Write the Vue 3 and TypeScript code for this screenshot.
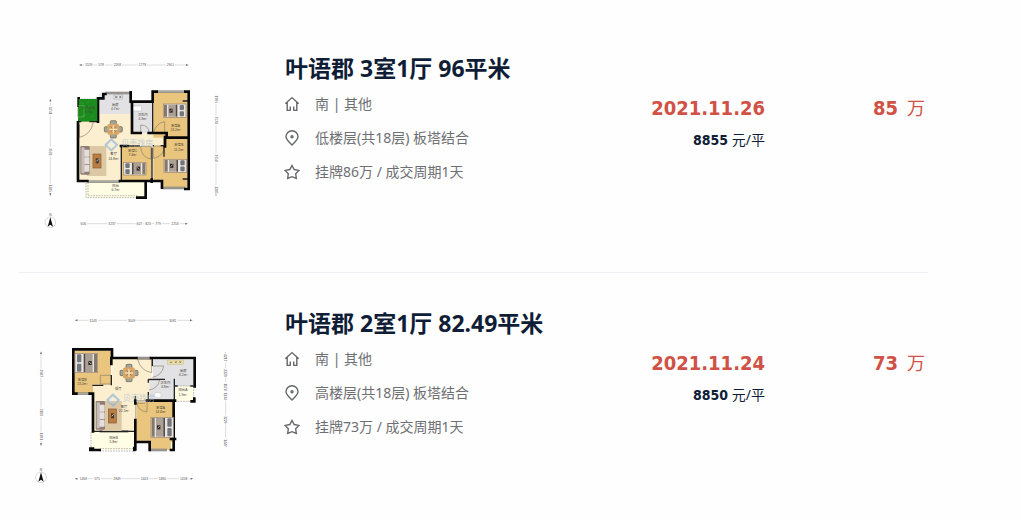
<script setup lang="ts">
type Box = [x: number, y: number, w: number, h: number, fill: string]
type Label = [x: number, y: number, text: string]
type Bed = { x: number; y: number; w: number; h: number; flip: boolean }

interface Dimension {
  x: number
  y: number
  length: number
  vertical: boolean
  marks: [offset: number, text: string][]
}

interface Plan {
  origin: [number, number]
  floors: Box[]
  walls: string
  thin: string
  doors: string
  windows: string
  dashes: string
  beds: Bed[]
  sofa: [number, number]
  dining: [number, number]
  brand: [number, number]
  labels: Label[]
  dimensions: Dimension[]
  compass: [number, number]
}

interface Listing {
  id: number
  title: string
  facing: string
  floor: string
  deal: string
  date: string
  unitPrice: string
  total: string
  plan: Plan
}

const cream = '#fbefcf'
const wood = '#e9c57e'
const tile = '#e2e2e5'
const balcony = '#fffde4'

const listings: Listing[] = [
  {
    id: 1,
    title: '叶语郡 3室1厅 96平米',
    facing: '南 | 其他',
    floor: '低楼层(共18层) 板塔结合',
    deal: '挂牌86万 / 成交周期1天',
    date: '2021.11.26',
    unitPrice: '8855',
    total: '85',
    plan: {
      origin: [105, 105],
      floors: [
        [27, 108, 62, 180, cream],
        [86, 86, 100, 202, cream],
        [150, 144, 138, 38, cream],
        [24, 42, 62, 68, '#249126'],
        [88, 25, 98, 62, tile],
        [188, 52, 58, 92, tile],
        [250, 22, 102, 136, wood],
        [250, 182, 34, 108, wood],
        [280, 160, 72, 148, wood],
        [155, 183, 90, 106, wood],
        [48, 291, 176, 48, balcony],
      ],
      walls:
        'M26 40V62M24 112V288H52M150 288H276V308M245 284V290M84 40V110M87 40H100V27H106M182 22V50H248V20H260M346 20H356V312H346M355 158H285M285 156V184M186 50V144H212M236 144H290V156M153 183H172M227 290V338H202',
      thin: 'M84 110H58M248 50V144M338 48H356M338 282H356M154 183V288M154 183H210M246 188V284M248 182H252M272 182H284M282 184V215M24 110H34',
      doors:
        'M28 118V157Q62 150 70 112M212 144V120Q237 120 237 144M248 144H284V110Q260 112 250 144M212 184H243V222Q214 218 212 184M250 220V183H284M250 220Q280 215 284 184M42 64H24V96',
      windows: 'M106 24H182M260 20H346M276 309H346M52 290H150',
      dashes: 'M26 42H84M48 294V338H202M54 292V332H202',
      beds: [
        { x: 280, y: 57, w: 68, h: 40, flip: false },
        { x: 282, y: 223, w: 68, h: 39, flip: false },
        { x: 160, y: 232, w: 68, h: 38, flip: true },
      ],
      sofa: [31, 183],
      dining: [130, 133],
      brand: [124, 179],
      labels: [
        [56, 72, '入户花园'], [56, 84, '4.7m²'],
        [136, 64, '厨房'], [136, 76, '4.7m²'],
        [218, 94, '卫生间'], [218, 106, '4.3m²'],
        [317, 125, '卧室A'], [317, 137, '13.2m²'],
        [327, 184, '卧室B'], [327, 197, '11.2m²'],
        [188, 202, '卧室C'], [188, 214, '7.4m²'],
        [131, 211, '客厅'], [131, 224, '24.8m²'],
        [137, 306, '阳台'], [137, 319, '6.7m²'],
      ],
      dimensions: [
        { x: 133, y: 45, length: 327, vertical: false, marks: [[28, '1559'], [65, '578'], [114, '2268'], [189, '1778'], [273, '2901']] },
        { x: 135, y: 521, length: 323, vertical: false, marks: [[10, '606'], [96, '3237'], [178, '607'], [204, '823'], [234, '779'], [285, '2253']] },
        { x: 46, y: 147, length: 290, vertical: true, marks: [[35, '1741'], [158, '3578'], [268, '1285']] },
        { x: 543, y: 134, length: 304, vertical: true, marks: [[14, '1906'], [77, '3578'], [190, '3658'], [286, '1285']] },
      ],
      compass: [46, 517],
    },
  },
  {
    id: 2,
    title: '叶语郡 2室1厅 82.49平米',
    facing: '南 | 其他',
    floor: '高楼层(共18层) 板塔结合',
    deal: '挂牌73万 / 成交周期1天',
    date: '2021.11.24',
    unitPrice: '8850',
    total: '73',
    plan: {
      origin: [90, 111],
      floors: [
        [28, 26, 110, 128, wood],
        [142, 50, 118, 124, cream],
        [84, 128, 126, 140, cream],
        [200, 110, 52, 66, cream],
        [264, 54, 122, 78, tile],
        [254, 112, 72, 62, tile],
        [328, 132, 58, 46, balcony],
        [214, 178, 112, 122, wood],
        [256, 298, 62, 26, wood],
        [78, 270, 134, 54, balcony],
      ],
      walls:
        'M32 155H25V22H141V48H214M258 48H389V133M139 48V66M84 155V268M28 155H34M74 155H84M326 176V324H318M246 176H330M211 176V184M211 234V322M211 300H254V324M84 320H76V324H104M208 318V324M318 291H330M380 178H388V170',
      thin: 'M82 130H115M139 99V130M250 112H300M250 112V122M250 150V176M328 110V176M244 176H254M82 268H211M211 162V176M262 50V72M328 132H338M376 132H386',
      doors:
        'M140 100H106V126H139M218 50V52H260V92Q226 86 218 52M262 72H296Q292 100 262 106M252 114H284Q278 140 252 144M214 176H246V210Q216 206 214 176M212 234V184H240',
      windows: 'M34 155H74M254 324H306M104 268H190M215 48H258',
      dashes: 'M338 132H376M330 178H380M78 270V316M104 320H206M104 327H206M386 134V176',
      beds: [
        { x: 30, y: 34, w: 68, h: 58, flip: true },
        { x: 258, y: 226, w: 68, h: 60, flip: false },
      ],
      sofa: [92, 177],
      dining: [192, 93],
      brand: [144, 174],
      labels: [
        [52, 118, '卧室B'], [52, 130, '13.2m²'],
        [160, 144, '餐厅'],
        [355, 91, '厨房'], [355, 103, '6.2m²'],
        [301, 127, '卫生间'], [301, 139, '3.8m²'],
        [354, 148, '阳台A'], [354, 161, '1.9m²'],
        [177, 198, '客厅'], [177, 210, '22.1m²'],
        [287, 202, '卧室A'], [287, 214, '14.6m²'],
        [146, 290, '阳台B'], [146, 302, '5.8m²'],
      ],
      dimensions: [
        { x: 120, y: 46, length: 352, vertical: false, marks: [[54, '3143'], [170, '3009'], [293, '3081']] },
        { x: 120, y: 521, length: 354, vertical: false, marks: [[25, '1468'], [66, '575'], [126, '2849'], [208, '1443'], [262, '1680'], [326, '1458']] },
        { x: 18, y: 140, length: 282, vertical: true, marks: [[65, '2987'], [182, '3100'], [254, '1891']] },
        { x: 572, y: 142, length: 286, vertical: true, marks: [[16, '4217'], [62, '2229'], [104, '1178'], [132, '1134'], [202, '3229'], [272, '1487']] },
      ],
      compass: [18, 517],
    },
  },
]
</script>

<template>
  <main class="listings">
    <article v-for="item in listings" :key="item.id" class="listing">
      <svg class="plan" viewBox="0 0 600 570" role="img" :aria-label="item.title">
        <g
          v-for="(d, i) in item.plan.dimensions"
          :key="`d${i}`"
          :transform="`translate(${d.x} ${d.y}) rotate(${d.vertical ? 90 : 0})`"
        >
          <path :d="`M0 0H${d.length}`" stroke="#bdbdbd" stroke-width="1.5" />
          <path :d="`M0 0l7 -3v6zM${d.length} 0l-7 -3v6z`" fill="#666" />
          <g v-for="([offset, text], k) in d.marks" :key="k">
            <rect :x="offset - text.length * 3 - 2" y="-5" :width="text.length * 6 + 4" height="10" fill="#fff" />
            <text :x="offset" y="4" class="mark">{{ text }}</text>
          </g>
        </g>

        <g :transform="`translate(${item.plan.compass[0]} ${item.plan.compass[1]})`">
          <circle r="16" fill="#fff" stroke="#b5b5b5" stroke-width="1.5" />
          <path d="M0 -15L8 13L0 7L-8 13Z" fill="#111" />
          <text y="-20" class="mark">N</text>
        </g>

        <g :transform="`translate(${item.plan.origin[0]} ${item.plan.origin[1]})`" fill="none">
          <rect
            v-for="([x, y, w, h, fill], i) in item.plan.floors"
            :key="`f${i}`"
            :x="x"
            :y="y"
            :width="w"
            :height="h"
            :fill="fill"
          />
          <path :d="item.plan.dashes" stroke="#999" stroke-width="2" stroke-dasharray="5 3" />
          <path :d="item.plan.windows" stroke="#77736c" stroke-width="7" />
          <path :d="item.plan.windows" stroke="#d8d6d2" stroke-width="2" />
          <path :d="item.plan.doors" stroke="#8d8068" stroke-width="2" />
          <path :d="item.plan.thin" stroke="#222" stroke-width="4" />
          <path :d="item.plan.walls" stroke="#080808" stroke-width="8" stroke-linecap="square" />

          <g
            v-for="(b, i) in item.plan.beds"
            :key="`b${i}`"
            :transform="b.flip ? `translate(${b.x + b.w} ${b.y}) scale(-1 1)` : `translate(${b.x} ${b.y})`"
          >
            <rect :width="b.w" :height="b.h" fill="#e9e4df" stroke="#97806a" stroke-width="2" />
            <rect x="2" y="2" width="9" :height="b.h - 4" fill="#85786d" />
            <rect x="15" y="2" width="22" :height="b.h - 4" fill="#aaa096" />
            <rect x="37" y="2" width="5" :height="b.h - 4" fill="#554943" />
            <rect :x="b.w - 19" y="3" width="13" :height="b.h / 2 - 5" rx="3" fill="#72777d" />
            <rect :x="b.w - 19" :y="b.h / 2 + 2" width="13" :height="b.h / 2 - 5" rx="3" fill="#72777d" />
            <rect x="18" :y="b.h / 2 - 6" width="10" height="12" fill="#2d2726" />
            <path :d="`M20 ${b.h / 2 + 3}l6 -7`" stroke="#eee" stroke-width="2" />
          </g>

          <g :transform="`translate(${item.plan.sofa[0]} ${item.plan.sofa[1]})`">
            <rect x="20" width="58" height="90" fill="#dcc8a4" />
            <rect width="28" height="86" rx="4" fill="#8f7c76" />
            <rect x="3" y="4" width="10" height="78" rx="3" fill="#c9bdb9" />
            <rect x="12" y="11" width="15" height="21" rx="2" fill="#e4dfdd" />
            <rect x="12" y="34" width="15" height="21" rx="2" fill="#e4dfdd" />
            <rect x="12" y="57" width="15" height="20" rx="2" fill="#e4dfdd" />
            <rect x="38" y="24" width="24" height="42" fill="#ba7e43" stroke="#865a30" stroke-width="2" />
            <rect x="46" y="37" width="9" height="15" fill="#413d3b" />
            <path d="M48 46l6 -6" stroke="#fff" stroke-width="2" />
          </g>

          <g :transform="`translate(${item.plan.dining[0]} ${item.plan.dining[1]})`">
            <g fill="#99a5a2" stroke="#795b3b" stroke-width="2">
              <rect x="-9" y="-26" width="18" height="12" rx="3" />
              <rect x="-9" y="14" width="18" height="12" rx="3" />
              <rect x="-27" y="-8" width="12" height="16" rx="3" />
              <rect x="15" y="-8" width="12" height="16" rx="3" />
            </g>
            <rect x="-18" y="-17" width="36" height="34" rx="8" fill="#d5a667" />
            <path d="M0 -12V12M-12 0H12" stroke="#fff0cc" stroke-width="3" />
            <path d="M-8 -8l5 5M8 -8l-5 5M-8 8l5 -5M8 8l-5 -5" stroke="#75654f" stroke-width="2" />
          </g>

          <g v-if="item.id === 1">
            <rect x="26" y="42" width="56" height="66" fill="#1b8b1d" />
            <path d="M30 52l12 5M58 48l-8 8M34 95l12-5M62 98l10-8M54 63l10 3" stroke="#37a033" stroke-width="2" />
            <path d="M24 62h18v34H24" stroke="#b9cf98" stroke-width="1" />
            <rect x="132" y="30" width="26" height="12" fill="#eee" stroke="#777" />
            <path d="M136 33l6 6m0-6l-6 6M148 33l6 6m0-6l-6 6" stroke="#444" stroke-width="2" />
            <rect x="191" y="63" width="24" height="15" rx="3" fill="#fff" stroke="#999" />
          </g>
          <g v-else>
            <rect x="308" y="54" width="48" height="14" fill="#eee0a9" stroke="#aaa07a" />
            <path d="M314 61h8M330 58l5 5m0-5l-5 5M343 58l5 5m0-5l-5 5" stroke="#555" stroke-width="2" />
            <rect x="268" y="152" width="20" height="15" rx="6" fill="#fff" stroke="#aaa" />
          </g>

          <g :transform="`translate(${item.plan.brand[0]} ${item.plan.brand[1]})`" opacity="0.65">
            <path d="M-17 0L0 -16L17 0L0 17Z" stroke="#8ab2dc" stroke-width="6" />
            <path d="M-8 8V-2L0 -9L8 -2V8" stroke="#dce9f5" stroke-width="3" />
            <text x="30" y="4" class="brand">贝壳找房</text>
          </g>
          <text v-for="([x, y, text], i) in item.plan.labels" :key="`l${i}`" :x="x" :y="y" class="room">{{ text }}</text>
        </g>
      </svg>

      <div class="info">
        <h2 class="title">{{ item.title }}</h2>
        <ul class="facts">
          <li>
            <svg class="icon" viewBox="0 0 16 16" aria-hidden="true">
              <path d="M1.3 7.8L8 1.6l6.7 6.2M3.2 6.4v8h2.9M12.8 6.4v8H9.9M6.3 14.8v-4.3M9.7 14.8v-4.3" />
            </svg>
            <span>{{ item.facing }}</span>
          </li>
          <li>
            <svg class="icon" viewBox="0 0 16 16" aria-hidden="true">
              <path d="M8 15C5.2 12.3 2 9.7 2 6.8A6 6 0 0 1 14 6.8C14 9.7 10.8 12.3 8 15Z" />
              <circle cx="8" cy="6.8" r="1" />
            </svg>
            <span>{{ item.floor }}</span>
          </li>
          <li>
            <svg class="icon" viewBox="0 0 16 16" aria-hidden="true">
              <path d="M8 1.5l2.2 4 4.7.9-3.2 3.4.6 4.6L8 12.7l-4.3 1.7.6-4.6L1.1 6.4l4.7-.9z" />
            </svg>
            <span>{{ item.deal }}</span>
          </li>
        </ul>
      </div>

      <div class="deal">
        <time class="date">{{ item.date }}</time>
        <p class="unit"><b>{{ item.unitPrice }}</b> 元/平</p>
      </div>
      <p class="total"><b>{{ item.total }}</b><span>万</span></p>
    </article>
  </main>
</template>

<style>
body {
  margin: 0;
  background: #fefefe;
}
</style>

<style scoped>
.listings {
  padding: 18px 93px 0 19px;
  font-family: 'Noto Sans', 'Noto Sans CJK SC', sans-serif;
  color: #0f1d36;
}

.listing {
  display: grid;
  grid-template-columns: 200px minmax(270px, 1fr) 160px 160px;
  padding: 32px 3px 32px 16px;
  border-bottom: 1px solid #f2eff4;
}

.listing:last-child {
  padding-bottom: 0;
  border-bottom: 0;
}

.plan {
  display: block;
  width: 200px;
  height: 190px;
}

.mark {
  font: 10px 'Liberation Sans', sans-serif;
  text-anchor: middle;
  fill: #555;
}

.room {
  font: 10px 'Liberation Sans', 'Noto Sans CJK SC', sans-serif;
  text-anchor: middle;
  fill: #4b4238;
}

.brand {
  font: 24px 'Noto Sans CJK SC', sans-serif;
  fill: #a5b9d0;
}

.info {
  padding-left: 50px;
  white-space: nowrap;
}

.title {
  margin: 1px 0 0;
  font-size: 23px;
  line-height: 34px;
  font-weight: 700;
}

.facts {
  margin: 2px 0 0;
  padding: 0;
  list-style: none;
  font-size: 14px;
  line-height: 34px;
  color: #6e6f73;
}

.facts li {
  display: flex;
  align-items: center;
  gap: 15px;
}

.icon {
  width: 16px;
  height: 16px;
  margin-left: -1px;
  fill: none;
  stroke: #66676b;
  stroke-width: 1.4;
}

.deal,
.total {
  margin: 0;
  padding-top: 43px;
  text-align: right;
  line-height: 30px;
  white-space: nowrap;
}

.date,
.total b {
  font-family: 'DejaVu Sans Condensed', 'DejaVu Sans', sans-serif;
  font-size: 20px;
  font-weight: 700;
  color: #d05145;
}

.date {
  display: block;
}

.unit {
  margin: 5px 0 0;
  font-size: 14px;
  line-height: 24px;
}

.unit b {
  font-family: 'DejaVu Sans Condensed', 'DejaVu Sans', sans-serif;
}

.total span {
  margin-left: 9px;
  font-size: 18px;
  color: #d05145;
}
</style>
